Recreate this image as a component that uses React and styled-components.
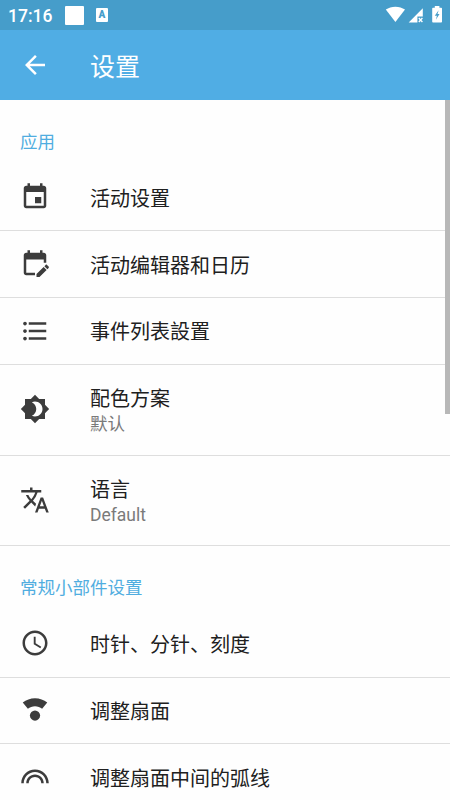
import styled, { createGlobalStyle } from 'styled-components'
import {
  MdArrowBack,
  MdBrightness4,
  MdFormatListBulleted,
  MdLooks,
  MdSchedule,
  MdTranslate
} from 'react-icons/md'

const EventIcon = () => (
  <svg viewBox='0 0 24 24' width='1em' height='1em' fill='currentColor'>
    <path d='M17 12h-5v5h5v-5zM16 1v2H8V1H6v2H5c-1.1 0-2 .9-2 2v14c0 1.1.9 2 2 2h14c1.1 0 2-.9 2-2V5c0-1.1-.9-2-2-2h-1V1h-2zm3 18H5V8h14v11z' />
  </svg>
)

const EditEventIcon = () => (
  <svg viewBox='0 0 24 24' width='1em' height='1em' fill='currentColor'>
    <path d='M16 1v2H8V1H6v2H5c-1.1 0-2 .9-2 2v14c0 1.1.9 2 2 2h7v-2H5V8.4h14V11h2V5c0-1.1-.9-2-2-2h-1V1h-2z' />
    <path d='m22.9 15.1-1 1-2.4-2.4 1-1c.3-.3.8-.3 1.1 0l1.3 1.3c.3.3.3.8 0 1.1zM18.9 14.3l2.4 2.4-5.7 5.7h-2.4V20z' />
  </svg>
)

const FanIcon = () => (
  <svg viewBox='0 0 24 24' width='1em' height='1em' fill='currentColor'>
    <path d='M2.2 6C4.9 3.8 8.3 2.5 12 2.5s7.1 1.3 9.8 3.5l-4.1 5C16.1 9.6 14.1 8.9 12 8.9s-4.1.7-5.7 2.1z' />
    <circle cx='12' cy='16.4' r='4.1' />
  </svg>
)

const sections = [
  {
    title: '应用',
    items: [
      { icon: EventIcon, title: '活动设置' },
      { icon: EditEventIcon, title: '活动编辑器和日历' },
      { icon: MdFormatListBulleted, title: '事件列表設置' },
      { icon: MdBrightness4, title: '配色方案', summary: '默认' },
      { icon: MdTranslate, title: '语言', summary: 'Default' }
    ]
  },
  {
    title: '常规小部件设置',
    items: [
      { icon: MdSchedule, title: '时针、分针、刻度' },
      { icon: FanIcon, title: '调整扇面' },
      { icon: MdLooks, title: '调整扇面中间的弧线' }
    ]
  }
]

const App = () => {
  return (
    <>
      <GlobalStyle />
      <Screen>
        <StatusBar>
          <Clock>17:16</Clock>
          <Square />
          <Badge>A</Badge>
          <SystemIcons />
        </StatusBar>

        <Toolbar>
          <BackButton aria-label='返回'><MdArrowBack /></BackButton>
          <Title>设置</Title>
        </Toolbar>

        <Content>
          {sections.map(section => (
            <section key={section.title}>
              <Category>{section.title}</Category>
              {section.items.map(({ icon: Icon, title, summary }) => (
                <Item key={title} $tall={!!summary}>
                  <IconBox><Icon /></IconBox>
                  <ItemText>
                    <ItemTitle>{title}</ItemTitle>
                    {summary && <Summary>{summary}</Summary>}
                  </ItemText>
                </Item>
              ))}
            </section>
          ))}
          <Scrollbar />
        </Content>
      </Screen>
    </>
  )
}

const SystemIcons = () => (
  <StatusSvg width='60' height='20' viewBox='0 0 60 20'>
    <path d='M.8 4.6C3.5 2.7 6.8 1.7 10.4 1.7s6.9 1 9.6 2.9L10.4 17z' />
    <path d='M23.7 17.4 37.8 3.2v8.2h-5.4v6z' />
    <path d='m33.8 13 3.6 4m0-4-3.6 4' fill='none' stroke='#fff' strokeWidth='1.3' />
    <path fillRule='evenodd' d='M49.8.9h4.6v1.8h1.8c.5 0 .8.3.8.8v13.2c0 .5-.3.8-.8.8H48c-.5 0-.8-.3-.8-.8V3.5c0-.5.3-.8.8-.8h1.8zM53.6 5.2l-3.8 5.6h2.1l-1 4 3.6-5.7h-2z' />
  </StatusSvg>
)

const GlobalStyle = createGlobalStyle`
  * {
    box-sizing: border-box;
  }

  body {
    margin: 0;
    background-color: #fefefe;
    font-family: Roboto, 'Noto Sans CJK SC', sans-serif;
    overflow: hidden;
  }
`

const Screen = styled.div`
  display: flex;
  flex-direction: column;
  width: 450px;
  height: 800px;
  overflow: hidden;
`

const StatusBar = styled.div`
  display: flex;
  align-items: center;
  flex: none;
  height: 30px;
  padding: 0 5px 0 8px;
  background-color: #469dca;
  color: white;
`

const Clock = styled.span`
  width: 57px;
  font-size: 17.5px;
  font-weight: 500;
  line-height: 30px;
  padding-top: 1px;
`

const Square = styled.div`
  width: 19px;
  height: 19px;
  border-radius: 1px;
  background-color: white;
`

const Badge = styled.span`
  width: 12px;
  height: 14px;
  margin-left: 12px;
  border-radius: 1px;
  background-color: white;
  color: #469dca;
  font-size: 10px;
  font-weight: 900;
  line-height: 13px;
  text-align: center;
`

const StatusSvg = styled.svg`
  margin-left: auto;
  fill: white;
`

const Toolbar = styled.header`
  display: flex;
  align-items: center;
  flex: none;
  height: 70px;
  padding: 0 20px;
  background-color: #50ade4;
  color: white;
`

const BackButton = styled.button`
  display: flex;
  width: 70px;
  padding: 0;
  border: 0;
  background: none;
  color: inherit;
  font-size: 30px;
`

const Title = styled.h1`
  margin: 0;
  padding-top: 5px;
  font-size: 25px;
  font-weight: 400;
  line-height: 36px;
`

const Content = styled.main`
  position: relative;
  flex: 1;
  overflow: hidden;
`

const Category = styled.h2`
  height: 64.8px;
  margin: 0;
  padding: 29px 20px 0;
  color: #50ade0;
  font-size: 17.5px;
  font-weight: 400;
  line-height: 26px;
`

const Item = styled.div`
  display: flex;
  align-items: center;
  height: ${props => props.$tall ? '90.7px' : '66.7px'};
  padding: 0 20px;
  border-bottom: 1px solid #dedede;
`

const IconBox = styled.div`
  display: flex;
  width: 70px;
  padding-bottom: 1px;
  color: #3c3c3c;
  font-size: 30px;
`

const ItemText = styled.div`
  padding-top: 3.5px;
`

const ItemTitle = styled.div`
  color: #202020;
  font-size: 20px;
  line-height: 27px;
`

const Summary = styled.div`
  margin-top: -1px;
  color: #7a7a7a;
  font-size: 17.5px;
  line-height: 24px;
`

const Scrollbar = styled.div`
  position: absolute;
  top: 0;
  right: 0;
  width: 5px;
  height: 314px;
  background-color: #b8b8b8;
`

export default App
